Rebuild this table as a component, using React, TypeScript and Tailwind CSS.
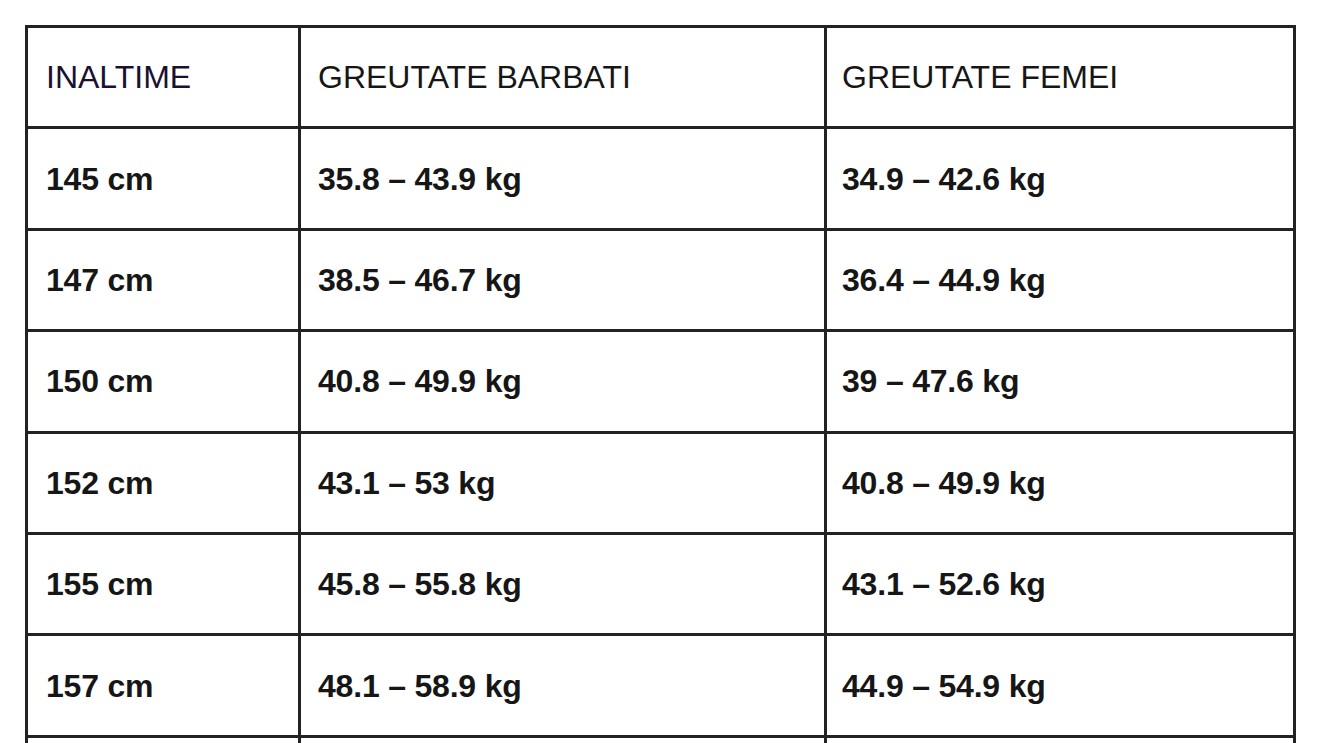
const rows: [string, string, string][] = [
  ['145 cm', '35.8 – 43.9 kg', '34.9 – 42.6 kg'],
  ['147 cm', '38.5 – 46.7 kg', '36.4 – 44.9 kg'],
  ['150 cm', '40.8 – 49.9 kg', '39 – 47.6 kg'],
  ['152 cm', '43.1 – 53 kg', '40.8 – 49.9 kg'],
  ['155 cm', '45.8 – 55.8 kg', '43.1 – 52.6 kg'],
  ['157 cm', '48.1 – 58.9 kg', '44.9 – 54.9 kg'],
  ['160 cm', '50.8 – 61.6 kg', '47.2 – 57.6 kg'],
  ['163 cm', '53 – 64.8 kg', '49.4 – 60.3 kg'],
]

const cell = 'border-[3px] border-[#222] h-[101.4px] p-0 align-middle'

export default function App() {
  return (
    <div className="min-h-screen bg-white pt-[25px] pl-[25px] font-['Liberation_Sans',Arial,sans-serif] text-[32px] text-[#161616]">
      <table className="border-collapse">
        <thead>
          <tr>
            <th className={`${cell} w-[273px] pl-[18px] text-left font-normal text-[#1a1030]`}>INALTIME</th>
            <th className={`${cell} w-[526px] pl-[17px] text-left font-normal`}>GREUTATE BARBATI</th>
            <th className={`${cell} w-[469px] pl-[15px] text-left font-normal`}>GREUTATE FEMEI</th>
          </tr>
        </thead>
        <tbody className="font-bold tracking-[-0.2px]">
          {rows.map(([h, m, f]) => (
            <tr key={h}>
              <td className={`${cell} pl-[18px]`}>{h}</td>
              <td className={`${cell} pl-[17px]`}>{m}</td>
              <td className={`${cell} pl-[15px]`}>{f}</td>
            </tr>
          ))}
        </tbody>
      </table>
    </div>
  )
}
